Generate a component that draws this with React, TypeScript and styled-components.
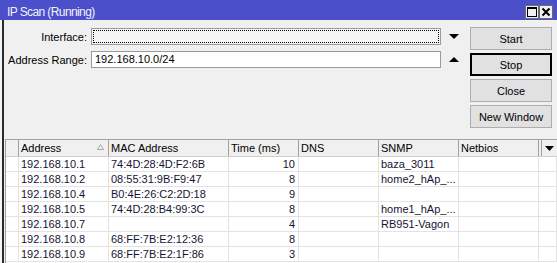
import React from "react";
import styled, { createGlobalStyle } from "styled-components";

const GlobalStyle = createGlobalStyle`
  html, body {
    margin: 0;
    padding: 0;
    background: #f4f4f4;
  }
  * {
    box-sizing: border-box;
  }
`;

type Row = {
  address: string;
  mac: string;
  time: string;
  dns: string;
  snmp: string;
  netbios: string;
};

const rows: Row[] = [
  { address: "192.168.10.1", mac: "74:4D:28:4D:F2:6B", time: "10", dns: "", snmp: "baza_3011", netbios: "" },
  { address: "192.168.10.2", mac: "08:55:31:9B:F9:47", time: "8", dns: "", snmp: "home2_hAp_...", netbios: "" },
  { address: "192.168.10.4", mac: "B0:4E:26:C2:2D:18", time: "9", dns: "", snmp: "", netbios: "" },
  { address: "192.168.10.5", mac: "74:4D:28:B4:99:3C", time: "8", dns: "", snmp: "home1_hAp_...", netbios: "" },
  { address: "192.168.10.7", mac: "", time: "4", dns: "", snmp: "RB951-Vagon", netbios: "" },
  { address: "192.168.10.8", mac: "68:FF:7B:E2:12:36", time: "8", dns: "", snmp: "", netbios: "" },
  { address: "192.168.10.9", mac: "68:FF:7B:E2:1F:86", time: "3", dns: "", snmp: "", netbios: "" },
];

const COLS = "13px 90px 120px 70px 80px 80px 80px 1fr";

const App = () => {
  return (
    <>
      <GlobalStyle />
      <Window>
        <TitleBar>
          <TitleText>IP Scan (Running)</TitleText>
          <TitleButtons>
            <TitleButton>
              <svg width="12" height="12" viewBox="0 0 12 12">
                <rect x="1.5" y="1.5" width="9" height="9" fill="none" stroke="#000" strokeWidth="1" />
                <rect x="1" y="1" width="10" height="2" fill="#000" />
              </svg>
            </TitleButton>
            <TitleButton>
              <svg width="12" height="12" viewBox="0 0 12 12">
                <path d="M2.5 2.5 L9.5 9.5 M9.5 2.5 L2.5 9.5" stroke="#000" strokeWidth="2" />
              </svg>
            </TitleButton>
          </TitleButtons>
        </TitleBar>

        <Body>
          <Top>
            <Form>
              <FormRow>
                <Label>Interface:</Label>
                <Input $focused></Input>
                <Arrow>
                  <svg width="10" height="6" viewBox="0 0 10 6">
                    <path d="M0 0 H10 L5 5 Z" fill="#000" />
                  </svg>
                </Arrow>
              </FormRow>
              <FormRow>
                <Label>Address Range:</Label>
                <Input>192.168.10.0/24</Input>
                <Arrow>
                  <svg width="10" height="6" viewBox="0 0 10 6">
                    <path d="M0 5 H10 L5 0 Z" fill="#000" />
                  </svg>
                </Arrow>
              </FormRow>
            </Form>
            <Buttons>
              <Button>Start</Button>
              <Button $default>Stop</Button>
              <Button>Close</Button>
              <Button>New Window</Button>
            </Buttons>
          </Top>

          <Table>
            <HeaderRow>
              <HeadCell />
              <HeadCell>
                Address
                <SortMark>
                  <svg width="7" height="6" viewBox="0 0 7 6">
                    <path d="M0.5 5.5 H6.5 L3.5 0.5 Z" fill="none" stroke="#a8a8a8" strokeWidth="1" />
                  </svg>
                </SortMark>
              </HeadCell>
              <HeadCell>MAC Address</HeadCell>
              <HeadCell>Time (ms)</HeadCell>
              <HeadCell>DNS</HeadCell>
              <HeadCell>SNMP</HeadCell>
              <HeadCell>Netbios</HeadCell>
              <MenuCell>
                <svg width="9" height="5" viewBox="0 0 9 5">
                  <path d="M0 0 H9 L4.5 5 Z" fill="#000" />
                </svg>
              </MenuCell>
            </HeaderRow>
            {rows.map((r) => (
              <DataRow key={r.address}>
                <Cell />
                <Cell>{r.address}</Cell>
                <Cell>{r.mac}</Cell>
                <Cell $right>{r.time}</Cell>
                <Cell>{r.dns}</Cell>
                <Cell>{r.snmp}</Cell>
                <Cell>{r.netbios}</Cell>
                <Cell />
              </DataRow>
            ))}
          </Table>
        </Body>
      </Window>
    </>
  );
};

const Window = styled.div`
  width: 557px;
  height: 263px;
  overflow: hidden;
  display: flex;
  flex-direction: column;
  font-family: "Liberation Sans", Arial, sans-serif;
  font-size: 11px;
  color: #000;
`;

const TitleBar = styled.div`
  height: 20px;
  flex: none;
  background: #4b4fc9;
  display: flex;
  align-items: center;
  justify-content: space-between;
  padding: 1px 4px 0 7px;
`;

const TitleText = styled.div`
  color: #f2f2ff;
  font-size: 12px;
  letter-spacing: -0.6px;
  padding-top: 2px;
`;

const TitleButtons = styled.div`
  display: flex;
  gap: 0;
  margin-top: 2px;
`;

const TitleButton = styled.div`
  width: 14px;
  height: 14px;
  background: #f0f0f0;
  border: 1px solid #6a6a6a;
  display: flex;
  align-items: center;
  justify-content: center;
`;

const Body = styled.div`
  flex: 1;
  margin-left: 2px;
  border-left: 2px solid #2a2a2a;
  background: #f0f0f0;
  display: flex;
  flex-direction: column;
  padding-top: 5px;
`;

const Top = styled.div`
  display: flex;
  padding-right: 5px;
`;

const Form = styled.div`
  flex: 1;
  display: flex;
  flex-direction: column;
`;

const FormRow = styled.div`
  height: 23px;
  display: flex;
  align-items: center;
`;

const Label = styled.div`
  width: 83px;
  text-align: right;
  margin-right: 4px;
`;

const Input = styled.div<{ $focused?: boolean }>`
  flex: 1;
  height: 17px;
  background: ${(p) => (p.$focused ? "#f4f4f4" : "#ffffff")};
  border: 1px solid #9a9a9a;
  padding-left: 3px;
  line-height: 15px;
  outline: ${(p) => (p.$focused ? "1px dotted #000" : "none")};
  outline-offset: -3px;
`;

const Arrow = styled.div`
  width: 29px;
  display: flex;
  justify-content: center;
  padding-right: 4px;
`;

const Buttons = styled.div`
  width: 82px;
  display: flex;
  flex-direction: column;
  gap: 3px;
  padding-top: 2px;
`;

const Button = styled.div<{ $default?: boolean }>`
  height: 23px;
  background: #e1e1e1;
  border: 1px solid ${(p) => (p.$default ? "#000" : "#adadad")};
  box-shadow: ${(p) => (p.$default ? "inset 0 0 0 1px #000" : "none")};
  display: flex;
  align-items: center;
  justify-content: center;
`;

const Table = styled.div`
  margin: 11px 0 0 1px;
  flex: 1;
  background: #fff;
  border-left: 1px solid #a0a0a0;
  border-top: 1px solid #a0a0a0;
`;

const HeaderRow = styled.div`
  display: grid;
  grid-template-columns: ${COLS};
  height: 17px;
  background: #f0f0f0;
  border-bottom: 1px solid #d0d0d0;
`;

const HeadCell = styled.div`
  position: relative;
  border-right: 1px solid #a0a0a0;
  padding-left: 2px;
  line-height: 16px;
  white-space: nowrap;
  overflow: hidden;
`;

const SortMark = styled.span`
  position: absolute;
  right: 4px;
  top: 4px;
  display: flex;
`;

const MenuCell = styled.div`
  margin-left: 2px;
  border-left: 1px solid #a0a0a0;
  display: flex;
  align-items: center;
  justify-content: center;
`;

const DataRow = styled.div`
  display: grid;
  grid-template-columns: ${COLS};
  height: 15px;
  border-bottom: 1px solid #e3e3e3;
`;

const Cell = styled.div<{ $right?: boolean }>`
  border-right: 1px solid #e3e3e3;
  padding: 0 3px 0 2px;
  line-height: 14px;
  white-space: nowrap;
  overflow: hidden;
  color: #141432;
  text-align: ${(p) => (p.$right ? "right" : "left")};
`;

export default App;
